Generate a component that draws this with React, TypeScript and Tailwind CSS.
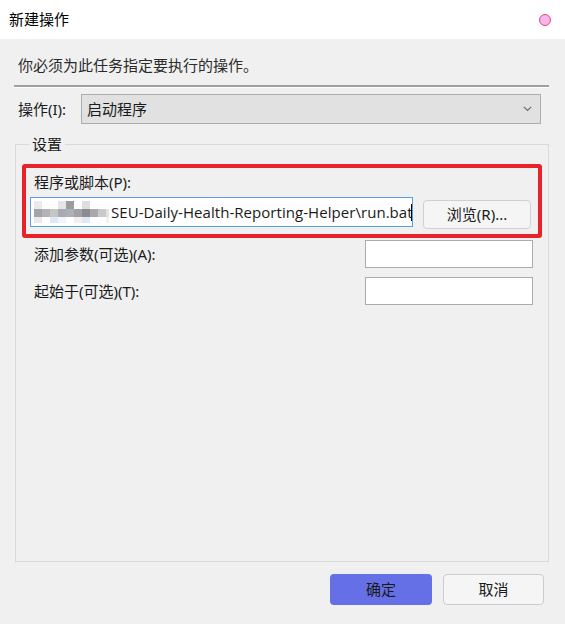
import React from "react";

const FONT = { fontFamily: '"Noto Sans", "Noto Sans CJK SC", sans-serif' };

const colW = [8, 8, 8, 8, 8, 8, 8, 8, 8, 3];
const topRow = ["#ebe9ee", "transparent", "transparent", "#e6e6ea", "#9c9ca0", "transparent", "#dedee2", "transparent", "transparent", "transparent"];
const midRow = ["#a3a3aa", "#b3b3b5", "#c3c6c1", "#a9a9b1", "#aab1b8", "#a2a2a3", "#8b8b91", "#a9a9aa", "#c9c9c9", "#e2e2e2"];
const botRow = ["#ebe7eb", "#ffffff", "#dde8f8", "#f1f4fc", "#ffffff", "#f1f1f1", "#dde8f8", "#ffffff", "#ffffff", "#f1f1f1"];

function Mosaic() {
  const rows = [topRow, midRow, botRow];
  const heights = ["h-[8px]", "h-[8px]", "h-[6px]"];
  return (
    <div className="flex flex-col shrink-0">
      {rows.map((r, i) => (
        <div key={i} className={`flex ${heights[i]}`}>
          {r.map((c, j) => (
            <div key={j} className="h-full" style={{ backgroundColor: c, width: colW[j] }} />
          ))}
        </div>
      ))}
    </div>
  );
}

export default function App() {
  return (
    <div className="w-[565px] h-[624px] bg-[#f0f0f0] flex flex-col text-[#1a1a1a] overflow-hidden" style={FONT}>
      {/* title bar */}
      <div className="h-[39px] bg-white flex items-center justify-between pl-[9px] pr-[14px] shrink-0">
        <span className="text-[15px] text-black">新建操作</span>
        <div className="w-[12px] h-[12px] rounded-full bg-[#f5b6ef] border-[1.5px] border-[#f0466e]" />
      </div>

      <div className="flex flex-col px-[14px]">
        <div className="pl-[4px] pt-[15px] text-[15px] leading-[22px] text-[#2b2b2b]">你必须为此任务指定要执行的操作。</div>
        <div className="mt-[9px] w-[535px] h-[2px] bg-[#a0a0a0]" />
        <div className="w-[535px] h-[1px] bg-white" />

        {/* action row */}
        <div className="flex items-center mt-[6px] h-[30px]">
          <span className="pl-[4px] w-[67px] text-[15px]">操作(I):</span>
          <div className="w-[460px] h-[30px] bg-[#e1e1e1] border border-[#adadad] flex items-center justify-between pl-[5px] pr-[8px]">
            <span className="text-[15px] text-[#1a1a1a]">启动程序</span>
            <svg width="9" height="6" viewBox="0 0 9 6">
              <path d="M0.8 0.8 L4.5 4.5 L8.2 0.8" fill="none" stroke="#6a6a6a" strokeWidth="1.2" />
            </svg>
          </div>
        </div>

        {/* group box */}
        <fieldset className="mt-[11px] ml-[1px] w-[534px] h-[427px] border border-[#d9d9d9] px-[6px] pt-0 pb-0">
          <legend className="ml-[7px] px-[3px] text-[15px] leading-[18px]">设置</legend>

          {/* red highlight */}
          <div className="mt-[11px] border-4 border-[#e8222b] rounded-[3px] h-[74px] flex flex-col">
            <div className="pl-[8px] pt-[4px] text-[15px] leading-[20px]">程序或脚本(P):</div>
            <div className="flex items-start mt-[5px] pl-[4px]">
              <div className="w-[383px] h-[30px] bg-white border border-[#5b9ee6] flex items-center pl-[3px] overflow-hidden relative">
                <Mosaic />
                <span className="ml-[2px] text-[15px] whitespace-nowrap text-[#1a1a1a]" style={{ fontFamily: '"Open Sans", "Noto Sans", sans-serif', letterSpacing: "0.05px" }}>
                  SEU-Daily-Health-Reporting-Helper\run.bat
                </span>
                <div className="absolute left-[380px] top-[6px] w-[1px] h-[17px] bg-black" />
              </div>
              <button className="ml-[10px] mt-[3px] w-[108px] h-[29px] bg-[#f5f5f5] border border-[#d0d0d0] rounded-[4px] text-[15px] text-[#1a1a1a] flex items-center justify-center">
                浏览(R)...
              </button>
            </div>
          </div>

          <div className="flex items-center justify-between mt-[2px] pl-[12px] pr-[9px] h-[28px]">
            <span className="text-[15px]">添加参数(可选)(A):</span>
            <div className="w-[168px] h-[28px] bg-white border border-[#ababab]" />
          </div>
          <div className="flex items-center justify-between mt-[9px] pl-[12px] pr-[9px] h-[28px]">
            <span className="text-[15px]">起始于(可选)(T):</span>
            <div className="w-[168px] h-[28px] bg-white border border-[#ababab]" />
          </div>
        </fieldset>
      </div>

      {/* footer buttons */}
      <div className="flex justify-end gap-[11px] pr-[21px] mt-[12px]">
        <button className="w-[102px] h-[31px] bg-[#6670e6] rounded-[4px] text-[15px] text-[#1a1a1a]">确定</button>
        <button className="w-[101px] h-[31px] bg-[#f5f5f5] border border-[#cccccc] rounded-[4px] text-[15px] text-[#1a1a1a]">取消</button>
      </div>
    </div>
  );
}
